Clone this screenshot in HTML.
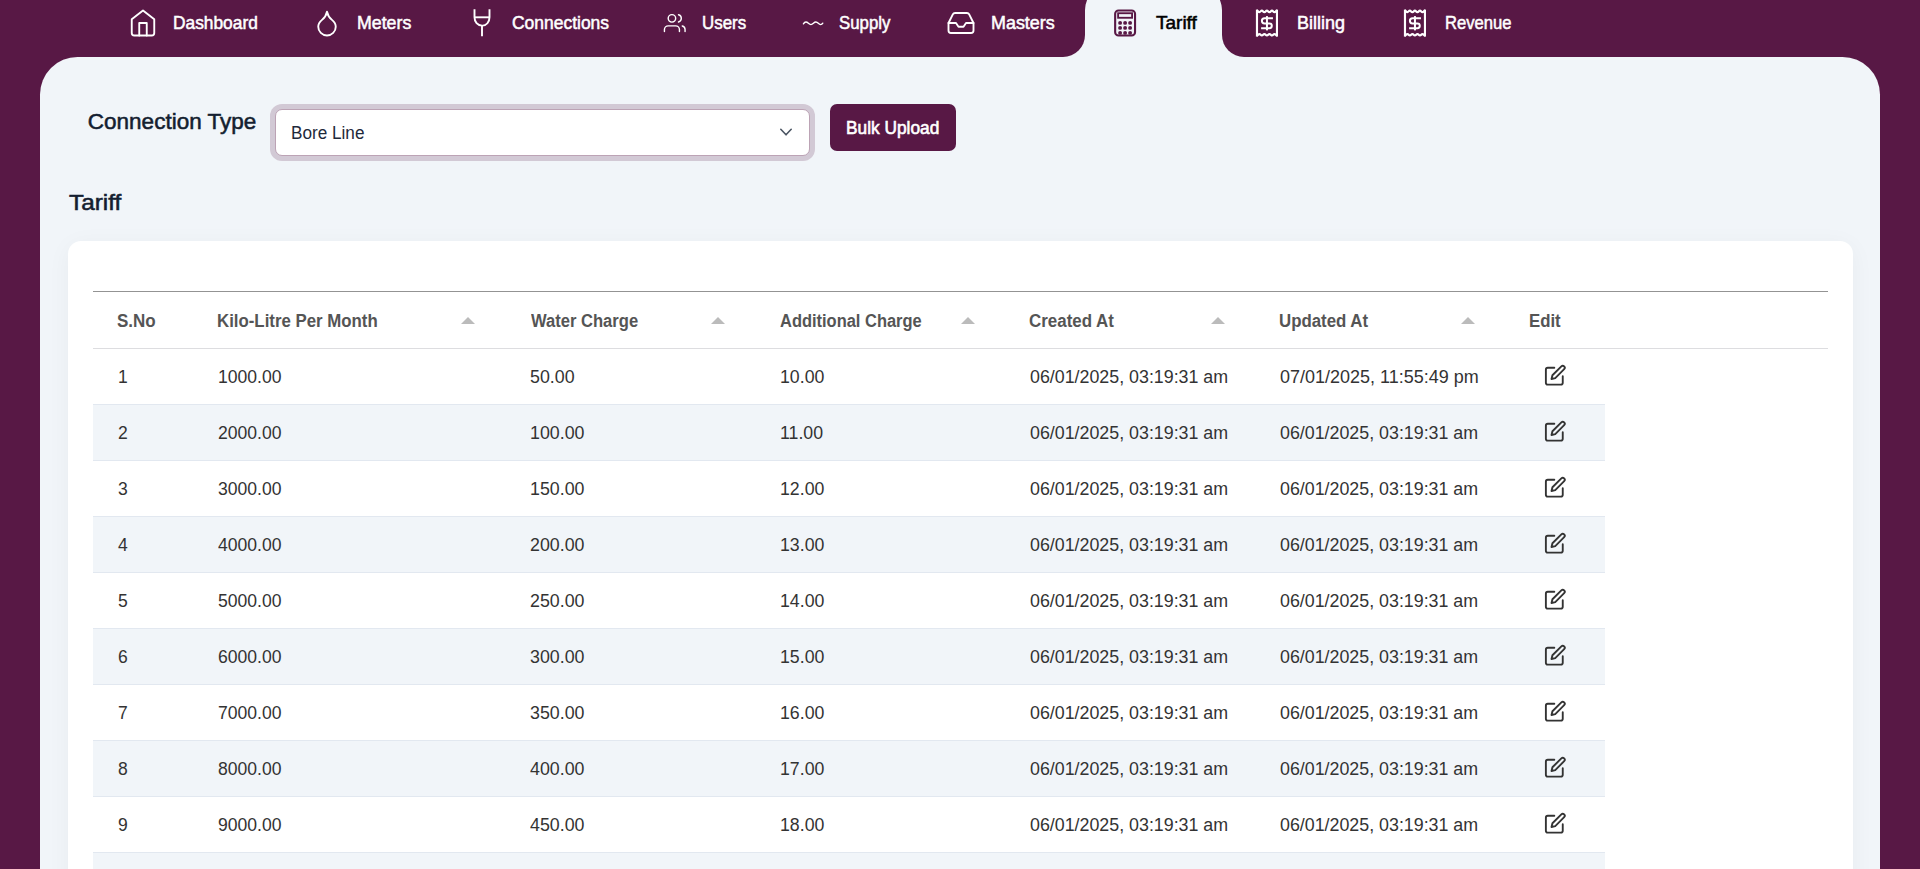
<!DOCTYPE html>
<html lang="en">
<head>
<meta charset="utf-8">
<title>Tariff</title>
<style>
*{box-sizing:border-box;margin:0;padding:0}
html,body{width:1920px;height:869px;overflow:hidden}
body{background:#581845;font-family:"Liberation Sans",sans-serif;position:relative;color:#1e293b}
.abs{position:absolute}
.t{position:absolute;white-space:nowrap;line-height:24px;height:24px;transform-origin:0 50%}
.nav{font-size:17.7px;color:#fff;-webkit-text-stroke:.5px #fff}
.nav.act{color:#000;-webkit-text-stroke:.5px #000}
.ico{position:absolute;overflow:visible}
#panel{left:40px;top:57px;width:1840px;height:900px;background:#f1f5f9;border-radius:37.5px 37.5px 0 0}
#tab{left:1085px;top:-15px;width:137px;height:73px;background:#f1f5f9;border-radius:25px 25px 0 0}
.inv{position:absolute;width:22px;height:22px;top:35px;overflow:hidden}
.inv:before{content:"";position:absolute;width:44px;height:44px;border-radius:50%;box-shadow:0 0 0 30px #f1f5f9}
#invl{left:1063px}#invl:before{left:-22px;top:-22px}
#invr{left:1222px}#invr:before{left:0;top:-22px}
.h{font-size:22.5px;-webkit-text-stroke:.55px #141e30;color:#141e30}
#sel{left:275px;top:109px;width:535px;height:47px;background:#fff;border:1px solid #bca3b5;border-radius:7px;box-shadow:0 0 0 5px rgba(88,24,69,.2)}
#btn{left:830px;top:104px;width:126px;height:47px;background:#581845;border-radius:7px}
.btxt{font-size:17.5px;color:#fff;-webkit-text-stroke:.6px #fff}
.stxt{font-size:17.5px;color:#1e293b}
#card{left:67.5px;top:240.5px;width:1785.5px;height:700px;background:#fff;border-radius:13px;box-shadow:0 4px 25px rgba(0,0,0,.045)}
#ltop{left:92.5px;top:291px;width:1735px;height:1px;background:#939393}
#lbot{left:92.5px;top:348px;width:1735px;height:1px;background:#dddde0}
.th{font-size:17.5px;font-weight:bold;color:#555}
.td{font-size:17.5px;color:#333}
.row{position:absolute;left:92.5px;width:1512.5px;height:56px;border-bottom:1px solid #e2e8f0}
.row.ev{background:#f1f5f9}
.arr{position:absolute;width:0;height:0;border-left:7.5px solid transparent;border-right:7.5px solid transparent;border-bottom:7.5px solid #bbb;top:316.5px}
</style>
</head>
<body>
<div id="panel" class="abs"></div>
<div id="tab" class="abs"></div>
<div id="invl" class="inv"></div>
<div id="invr" class="inv"></div>
<nav class="abs" style="left:0;top:0">
<svg id="i_home" class="ico" style="left:128px;top:8px" width="30" height="30" viewBox="0 0 30 30"><g transform="translate(0.000 0.000) scale(1.25000 1.25000)" fill="none" stroke="#fff" stroke-width="1.5" stroke-linecap="round" stroke-linejoin="round"><path d="m3 9 9-7 9 7v11a2 2 0 0 1-2 2H5a2 2 0 0 1-2-2z"/><polyline points="9 22 9 12 15 12 15 22"/></g></svg>
<svg id="i_drop" class="ico" style="left:312px;top:8px" width="30" height="30" viewBox="0 0 30 30"><g transform="translate(0.000 0.000) scale(1.25000 1.25000)" fill="none" stroke="#fff" stroke-width="1.5" stroke-linecap="round" stroke-linejoin="round"><path d="M12 22a7 7 0 0 0 7-7c0-2-1-3.9-3-5.500s-3.500-4-4-6.500c-.5 2.500-2 4.900-4 6.500C6 11.100 5 13 5 15a7 7 0 0 0 7 7z"/></g></svg>
<svg id="i_conn" class="ico" style="left:467px;top:8px" width="30" height="30" viewBox="0 0 30 30"><g transform="translate(0.000 0.000)" fill="none" stroke="#fff" stroke-width="1.9" stroke-linecap="butt" stroke-linejoin="round"><path d="M7.5 1.200V9.300c0 4.500 3 8 7.500 8.300s7.500-3.800 7.500-8.300V1.200"/><path d="M7.500 9.300h15"/><path d="M15 17.500V28.300"/></g></svg>
<svg id="i_users" class="ico" style="left:663px;top:11px" width="23" height="24" viewBox="0 0 23 24"><g transform="translate(0.500 0.800) scale(0.93750 0.93750)" fill="none" stroke="#fff" stroke-width="1.5" stroke-linecap="round" stroke-linejoin="round"><path d="M17 21v-2a4 4 0 0 0-4-4H5a4 4 0 0 0-4 4v2"/><circle cx="9" cy="7" r="4"/><path d="M23 21v-2a4 4 0 0 0-3-3.870"/><path d="M16 3.130a4 4 0 0 1 0 7.750"/></g></svg>
<svg id="i_supply" class="ico" style="left:800px;top:15px" width="26" height="16" viewBox="0 0 26 16"><g transform="translate(0.000 0.000)" fill="none" stroke="#fff" stroke-width="1.350" stroke-linecap="round" stroke-linejoin="round"><path d="M3.400 8.900C4.100 7.700 4.900 7 5.900 7c2.300 0 2.700 2.600 5 2.600s2.700-2.600 5-2.600 2.500 2.600 4.700 2.600c1 0 1.700-.500 2.200-1.400"/></g></svg>
<svg id="i_inbox" class="ico" style="left:946px;top:8px" width="30" height="30" viewBox="0 0 30 30"><g transform="translate(0.000 0.000) scale(1.25000 1.25000)" fill="none" stroke="#fff" stroke-width="1.5" stroke-linecap="round" stroke-linejoin="round"><polyline points="22 12 16 12 14 15 10 15 8 12 2 12"/><path d="M5.450 5.110 2 12v6a2 2 0 0 0 2 2h16a2 2 0 0 0 2-2v-6l-3.450-6.890A2 2 0 0 0 16.760 4H7.240a2 2 0 0 0-1.790 1.110z"/></g></svg>
<svg id="i_calc" class="ico" style="left:1114px;top:9px" width="23" height="28" viewBox="0 0 23 28"><g transform="translate(0.100 0.400)" ><rect x="1.050" y="1.050" width="19.900" height="25.100" rx="3.400" fill="none" stroke="#581845" stroke-width="2.100"/><rect x="4.025" y="3.825" width="13.950" height="4.550" fill="none" stroke="#581845" stroke-width="1.850"/><circle cx="6" cy="13.5" r="1.950" fill="#581845"/><circle cx="11" cy="13.5" r="1.950" fill="#581845"/><circle cx="16" cy="13.5" r="1.950" fill="#581845"/><circle cx="6" cy="18.5" r="1.950" fill="#581845"/><circle cx="11" cy="18.5" r="1.950" fill="#581845"/><circle cx="16" cy="18.5" r="1.950" fill="#581845"/><circle cx="6" cy="23.5" r="1.950" fill="#581845"/><circle cx="11" cy="23.5" r="1.950" fill="#581845"/><circle cx="16" cy="23.5" r="1.950" fill="#581845"/></g></svg>
<svg id="i_bill" class="ico" style="left:1255px;top:9px" width="24" height="28" viewBox="0 0 24 28"><g transform="translate(0.900 0.600)" ><rect x="0" y="0" width="2.150" height="27.0" fill="#fff"/><rect x="20.000" y="0" width="2.100" height="27.0" fill="#fff"/><path d="M1.0 1.1C2.250 1.1 2.250 2.5 3.5 2.5C4.725 2.5 4.725 1.1 5.95 1.1C7.225 1.1 7.225 2.5 8.5 2.5C9.750 2.5 9.750 1.1 11.0 1.1C12.275 1.1 12.275 2.5 13.55 2.5C14.800 2.5 14.800 1.1 16.05 1.1C17.325 1.1 17.325 2.5 18.6 2.5C19.850 2.5 19.850 1.1 21.1 1.1" fill="none" stroke="#fff" stroke-width="2.200"/><path d="M1.0 25.9C2.250 25.9 2.250 24.5 3.5 24.5C4.725 24.5 4.725 25.9 5.95 25.9C7.225 25.9 7.225 24.5 8.5 24.5C9.750 24.5 9.750 25.9 11.0 25.9C12.275 25.9 12.275 24.5 13.55 24.5C14.800 24.5 14.800 25.9 16.05 25.9C17.325 25.9 17.325 24.5 18.6 24.5C19.850 24.5 19.850 25.9 21.1 25.9" fill="none" stroke="#fff" stroke-width="2.200"/><path d="M17.050 8.600H8.600a2.600 2.600 0 0 0 0 5.200H13.500a2.400 2.400 0 0 1 0 4.800H5.200" fill="none" stroke="#fff" stroke-width="2"/><path d="M11.050 6.500V20.800" fill="none" stroke="#fff" stroke-width="2"/></g></svg>
<svg id="i_rev" class="ico" style="left:1403px;top:9px" width="24" height="28" viewBox="0 0 24 28"><g transform="translate(0.900 0.600)" ><rect x="0" y="0" width="2.150" height="27.0" fill="#fff"/><rect x="20.000" y="0" width="2.100" height="27.0" fill="#fff"/><path d="M1.0 1.1C2.250 1.1 2.250 2.5 3.5 2.5C4.725 2.5 4.725 1.1 5.95 1.1C7.225 1.1 7.225 2.5 8.5 2.5C9.750 2.5 9.750 1.1 11.0 1.1C12.275 1.1 12.275 2.5 13.55 2.5C14.800 2.5 14.800 1.1 16.05 1.1C17.325 1.1 17.325 2.5 18.6 2.5C19.850 2.5 19.850 1.1 21.1 1.1" fill="none" stroke="#fff" stroke-width="2.200"/><path d="M1.0 25.9C2.250 25.9 2.250 24.5 3.5 24.5C4.725 24.5 4.725 25.9 5.95 25.9C7.225 25.9 7.225 24.5 8.5 24.5C9.750 24.5 9.750 25.9 11.0 25.9C12.275 25.9 12.275 24.5 13.55 24.5C14.800 24.5 14.800 25.9 16.05 25.9C17.325 25.9 17.325 24.5 18.6 24.5C19.850 24.5 19.850 25.9 21.1 25.9" fill="none" stroke="#fff" stroke-width="2.200"/><path d="M17.050 8.600H8.600a2.600 2.600 0 0 0 0 5.200H13.500a2.400 2.400 0 0 1 0 4.800H5.200" fill="none" stroke="#fff" stroke-width="2"/><path d="M11.050 6.500V20.800" fill="none" stroke="#fff" stroke-width="2"/></g></svg>
<div id="n_dash" class="t nav" style="left:172.78px;top:10.77px;transform:scaleX(0.9802)">Dashboard</div>
<div id="n_met" class="t nav" style="left:356.90px;top:10.77px;transform:scaleX(1.0040)">Meters</div>
<div id="n_con" class="t nav" style="left:511.92px;top:10.77px;transform:scaleX(0.9869)">Connections</div>
<div id="n_usr" class="t nav" style="left:702.23px;top:10.77px;transform:scaleX(0.9550)">Users</div>
<div id="n_sup" class="t nav" style="left:839.08px;top:10.77px;transform:scaleX(0.9497)">Supply</div>
<div id="n_mas" class="t nav" style="left:991.34px;top:10.77px;transform:scaleX(1.0130)">Masters</div>
<div id="n_tar" class="t nav act" style="left:1156.12px;top:10.77px;transform:scaleX(1.0739)">Tariff</div>
<div id="n_bil" class="t nav" style="left:1296.78px;top:10.77px;transform:scaleX(1.0167)">Billing</div>
<div id="n_rev" class="t nav" style="left:1444.52px;top:10.77px;transform:scaleX(0.9396)">Revenue</div>
</nav>
<main class="abs" style="left:0;top:0">
<section class="abs" style="left:0;top:0">
<div id="f_lbl" class="t h" style="left:87.84px;top:109.90px">Connection Type</div>
<div id="sel" class="abs"></div>
<div id="f_sel" class="t stxt" style="left:290.58px;top:120.94px;transform:scaleX(0.9803)">Bore Line</div>
<svg id="i_chev" class="ico" style="left:778px;top:124px" width="16" height="16" viewBox="0 0 16 16"><g transform="translate(0.000 0.000)" fill="none" stroke="#4b5563" stroke-width="1.600" stroke-linecap="round" stroke-linejoin="round"><path d="M2.800 5.300 8 10.800 13.200 5.300"/></g></svg>
<div id="btn" class="abs"></div>
<div id="f_btn" class="t btxt" style="left:846.17px;top:115.69px;transform:scaleX(0.9884)">Bulk Upload</div>
<div id="f_ttl" class="t h" style="left:68.84px;top:191.00px;transform:scaleX(1.0794)">Tariff</div>
</section>
<section class="abs" style="left:0;top:0">
<div id="card" class="abs"></div>
<div id="ltop" class="abs"></div>
<div id="lbot" class="abs"></div>
<div id="h0" class="t th" style="left:116.85px;top:308.84px;transform:scaleX(0.9721)">S.No</div>
<div id="h1" class="t th" style="left:216.90px;top:308.84px;transform:scaleX(0.9608)">Kilo-Litre Per Month</div>
<div id="h2" class="t th" style="left:530.81px;top:308.84px;transform:scaleX(0.9468)">Water Charge</div>
<div id="h3" class="t th" style="left:780.08px;top:308.84px;transform:scaleX(0.9403)">Additional Charge</div>
<div id="h4" class="t th" style="left:1029.13px;top:308.84px;transform:scaleX(0.9670)">Created At</div>
<div id="h5" class="t th" style="left:1279.25px;top:308.84px;transform:scaleX(0.9617)">Updated At</div>
<div id="h6" class="t th" style="left:1528.89px;top:308.84px;transform:scaleX(0.9588)">Edit</div>
<div class="arr" style="left:460.5px"></div>
<div class="arr" style="left:710.5px"></div>
<div class="arr" style="left:960.5px"></div>
<div class="arr" style="left:1210.5px"></div>
<div class="arr" style="left:1460.5px"></div>
<div class="row" style="top:349px"></div>
<div id="r0c0" class="t td" style="left:117.90px;top:365.04px">1</div>
<div id="r0c1" class="t td" style="left:217.51px;top:365.04px;transform:scaleX(1.0038)">1000.00</div>
<div id="r0c2" class="t td" style="left:529.82px;top:365.04px;transform:scaleX(1.0166)">50.00</div>
<div id="r0c3" class="t td" style="left:780.01px;top:365.04px;transform:scaleX(1.0127)">10.00</div>
<div id="r0c4" class="t td" style="left:1029.94px;top:365.04px;transform:scaleX(1.0181)">06/01/2025, 03:19:31 am</div>
<div id="r0c5" class="t td" style="left:1279.94px;top:365.04px;transform:scaleX(1.0276)">07/01/2025, 11:55:49 pm</div>
<svg id="e0" class="ico" style="left:1544px;top:364px" width="23" height="23" viewBox="0 0 23 23"><g transform="translate(0.000 0.000) scale(0.93750 0.93750)" fill="none" stroke="#333" stroke-width="2" stroke-linecap="round" stroke-linejoin="round"><path d="M11 4H4a2 2 0 0 0-2 2v14a2 2 0 0 0 2 2h14a2 2 0 0 0 2-2v-7"/><path d="M18.500 2.500a2.121 2.121 0 0 1 3 3L12 15l-4 1 1-4 9.500-9.500z"/></g></svg>
<div class="row ev" style="top:405px"></div>
<div id="r1c0" class="t td" style="left:117.90px;top:421.04px">2</div>
<div id="r1c1" class="t td" style="left:217.51px;top:421.04px;transform:scaleX(1.0038)">2000.00</div>
<div id="r1c2" class="t td" style="left:529.82px;top:421.04px;transform:scaleX(1.0166)">100.00</div>
<div id="r1c3" class="t td" style="left:780.01px;top:421.04px;transform:scaleX(1.0127)">11.00</div>
<div id="r1c4" class="t td" style="left:1029.94px;top:421.04px;transform:scaleX(1.0181)">06/01/2025, 03:19:31 am</div>
<div id="r1c5" class="t td" style="left:1279.97px;top:421.04px;transform:scaleX(1.0181)">06/01/2025, 03:19:31 am</div>
<svg id="e1" class="ico" style="left:1544px;top:420px" width="23" height="23" viewBox="0 0 23 23"><g transform="translate(0.000 0.000) scale(0.93750 0.93750)" fill="none" stroke="#333" stroke-width="2" stroke-linecap="round" stroke-linejoin="round"><path d="M11 4H4a2 2 0 0 0-2 2v14a2 2 0 0 0 2 2h14a2 2 0 0 0 2-2v-7"/><path d="M18.500 2.500a2.121 2.121 0 0 1 3 3L12 15l-4 1 1-4 9.500-9.500z"/></g></svg>
<div class="row" style="top:461px"></div>
<div id="r2c0" class="t td" style="left:117.90px;top:477.04px">3</div>
<div id="r2c1" class="t td" style="left:217.51px;top:477.04px;transform:scaleX(1.0038)">3000.00</div>
<div id="r2c2" class="t td" style="left:529.82px;top:477.04px;transform:scaleX(1.0166)">150.00</div>
<div id="r2c3" class="t td" style="left:780.01px;top:477.04px;transform:scaleX(1.0127)">12.00</div>
<div id="r2c4" class="t td" style="left:1029.94px;top:477.04px;transform:scaleX(1.0181)">06/01/2025, 03:19:31 am</div>
<div id="r2c5" class="t td" style="left:1279.97px;top:477.04px;transform:scaleX(1.0181)">06/01/2025, 03:19:31 am</div>
<svg id="e2" class="ico" style="left:1544px;top:476px" width="23" height="23" viewBox="0 0 23 23"><g transform="translate(0.000 0.000) scale(0.93750 0.93750)" fill="none" stroke="#333" stroke-width="2" stroke-linecap="round" stroke-linejoin="round"><path d="M11 4H4a2 2 0 0 0-2 2v14a2 2 0 0 0 2 2h14a2 2 0 0 0 2-2v-7"/><path d="M18.500 2.500a2.121 2.121 0 0 1 3 3L12 15l-4 1 1-4 9.500-9.500z"/></g></svg>
<div class="row ev" style="top:517px"></div>
<div id="r3c0" class="t td" style="left:117.90px;top:533.04px">4</div>
<div id="r3c1" class="t td" style="left:217.51px;top:533.04px;transform:scaleX(1.0038)">4000.00</div>
<div id="r3c2" class="t td" style="left:529.82px;top:533.04px;transform:scaleX(1.0166)">200.00</div>
<div id="r3c3" class="t td" style="left:780.01px;top:533.04px;transform:scaleX(1.0127)">13.00</div>
<div id="r3c4" class="t td" style="left:1029.94px;top:533.04px;transform:scaleX(1.0181)">06/01/2025, 03:19:31 am</div>
<div id="r3c5" class="t td" style="left:1279.97px;top:533.04px;transform:scaleX(1.0181)">06/01/2025, 03:19:31 am</div>
<svg id="e3" class="ico" style="left:1544px;top:532px" width="23" height="23" viewBox="0 0 23 23"><g transform="translate(0.000 0.000) scale(0.93750 0.93750)" fill="none" stroke="#333" stroke-width="2" stroke-linecap="round" stroke-linejoin="round"><path d="M11 4H4a2 2 0 0 0-2 2v14a2 2 0 0 0 2 2h14a2 2 0 0 0 2-2v-7"/><path d="M18.500 2.500a2.121 2.121 0 0 1 3 3L12 15l-4 1 1-4 9.500-9.500z"/></g></svg>
<div class="row" style="top:573px"></div>
<div id="r4c0" class="t td" style="left:117.90px;top:589.04px">5</div>
<div id="r4c1" class="t td" style="left:217.51px;top:589.04px;transform:scaleX(1.0038)">5000.00</div>
<div id="r4c2" class="t td" style="left:529.82px;top:589.04px;transform:scaleX(1.0166)">250.00</div>
<div id="r4c3" class="t td" style="left:780.01px;top:589.04px;transform:scaleX(1.0127)">14.00</div>
<div id="r4c4" class="t td" style="left:1029.94px;top:589.04px;transform:scaleX(1.0181)">06/01/2025, 03:19:31 am</div>
<div id="r4c5" class="t td" style="left:1279.97px;top:589.04px;transform:scaleX(1.0181)">06/01/2025, 03:19:31 am</div>
<svg id="e4" class="ico" style="left:1544px;top:588px" width="23" height="23" viewBox="0 0 23 23"><g transform="translate(0.000 0.000) scale(0.93750 0.93750)" fill="none" stroke="#333" stroke-width="2" stroke-linecap="round" stroke-linejoin="round"><path d="M11 4H4a2 2 0 0 0-2 2v14a2 2 0 0 0 2 2h14a2 2 0 0 0 2-2v-7"/><path d="M18.500 2.500a2.121 2.121 0 0 1 3 3L12 15l-4 1 1-4 9.500-9.500z"/></g></svg>
<div class="row ev" style="top:629px"></div>
<div id="r5c0" class="t td" style="left:117.90px;top:645.04px">6</div>
<div id="r5c1" class="t td" style="left:217.51px;top:645.04px;transform:scaleX(1.0038)">6000.00</div>
<div id="r5c2" class="t td" style="left:529.82px;top:645.04px;transform:scaleX(1.0166)">300.00</div>
<div id="r5c3" class="t td" style="left:780.01px;top:645.04px;transform:scaleX(1.0127)">15.00</div>
<div id="r5c4" class="t td" style="left:1029.94px;top:645.04px;transform:scaleX(1.0181)">06/01/2025, 03:19:31 am</div>
<div id="r5c5" class="t td" style="left:1279.97px;top:645.04px;transform:scaleX(1.0181)">06/01/2025, 03:19:31 am</div>
<svg id="e5" class="ico" style="left:1544px;top:644px" width="23" height="23" viewBox="0 0 23 23"><g transform="translate(0.000 0.000) scale(0.93750 0.93750)" fill="none" stroke="#333" stroke-width="2" stroke-linecap="round" stroke-linejoin="round"><path d="M11 4H4a2 2 0 0 0-2 2v14a2 2 0 0 0 2 2h14a2 2 0 0 0 2-2v-7"/><path d="M18.500 2.500a2.121 2.121 0 0 1 3 3L12 15l-4 1 1-4 9.500-9.500z"/></g></svg>
<div class="row" style="top:685px"></div>
<div id="r6c0" class="t td" style="left:117.90px;top:701.04px">7</div>
<div id="r6c1" class="t td" style="left:217.51px;top:701.04px;transform:scaleX(1.0038)">7000.00</div>
<div id="r6c2" class="t td" style="left:529.82px;top:701.04px;transform:scaleX(1.0166)">350.00</div>
<div id="r6c3" class="t td" style="left:780.01px;top:701.04px;transform:scaleX(1.0127)">16.00</div>
<div id="r6c4" class="t td" style="left:1029.94px;top:701.04px;transform:scaleX(1.0181)">06/01/2025, 03:19:31 am</div>
<div id="r6c5" class="t td" style="left:1279.97px;top:701.04px;transform:scaleX(1.0181)">06/01/2025, 03:19:31 am</div>
<svg id="e6" class="ico" style="left:1544px;top:700px" width="23" height="23" viewBox="0 0 23 23"><g transform="translate(0.000 0.000) scale(0.93750 0.93750)" fill="none" stroke="#333" stroke-width="2" stroke-linecap="round" stroke-linejoin="round"><path d="M11 4H4a2 2 0 0 0-2 2v14a2 2 0 0 0 2 2h14a2 2 0 0 0 2-2v-7"/><path d="M18.500 2.500a2.121 2.121 0 0 1 3 3L12 15l-4 1 1-4 9.500-9.500z"/></g></svg>
<div class="row ev" style="top:741px"></div>
<div id="r7c0" class="t td" style="left:117.90px;top:757.04px">8</div>
<div id="r7c1" class="t td" style="left:217.51px;top:757.04px;transform:scaleX(1.0038)">8000.00</div>
<div id="r7c2" class="t td" style="left:529.82px;top:757.04px;transform:scaleX(1.0166)">400.00</div>
<div id="r7c3" class="t td" style="left:780.01px;top:757.04px;transform:scaleX(1.0127)">17.00</div>
<div id="r7c4" class="t td" style="left:1029.94px;top:757.04px;transform:scaleX(1.0181)">06/01/2025, 03:19:31 am</div>
<div id="r7c5" class="t td" style="left:1279.97px;top:757.04px;transform:scaleX(1.0181)">06/01/2025, 03:19:31 am</div>
<svg id="e7" class="ico" style="left:1544px;top:756px" width="23" height="23" viewBox="0 0 23 23"><g transform="translate(0.000 0.000) scale(0.93750 0.93750)" fill="none" stroke="#333" stroke-width="2" stroke-linecap="round" stroke-linejoin="round"><path d="M11 4H4a2 2 0 0 0-2 2v14a2 2 0 0 0 2 2h14a2 2 0 0 0 2-2v-7"/><path d="M18.500 2.500a2.121 2.121 0 0 1 3 3L12 15l-4 1 1-4 9.500-9.500z"/></g></svg>
<div class="row" style="top:797px"></div>
<div id="r8c0" class="t td" style="left:117.90px;top:813.04px">9</div>
<div id="r8c1" class="t td" style="left:217.51px;top:813.04px;transform:scaleX(1.0038)">9000.00</div>
<div id="r8c2" class="t td" style="left:529.82px;top:813.04px;transform:scaleX(1.0166)">450.00</div>
<div id="r8c3" class="t td" style="left:780.01px;top:813.04px;transform:scaleX(1.0127)">18.00</div>
<div id="r8c4" class="t td" style="left:1029.94px;top:813.04px;transform:scaleX(1.0181)">06/01/2025, 03:19:31 am</div>
<div id="r8c5" class="t td" style="left:1279.97px;top:813.04px;transform:scaleX(1.0181)">06/01/2025, 03:19:31 am</div>
<svg id="e8" class="ico" style="left:1544px;top:812px" width="23" height="23" viewBox="0 0 23 23"><g transform="translate(0.000 0.000) scale(0.93750 0.93750)" fill="none" stroke="#333" stroke-width="2" stroke-linecap="round" stroke-linejoin="round"><path d="M11 4H4a2 2 0 0 0-2 2v14a2 2 0 0 0 2 2h14a2 2 0 0 0 2-2v-7"/><path d="M18.500 2.500a2.121 2.121 0 0 1 3 3L12 15l-4 1 1-4 9.500-9.500z"/></g></svg>
<div class="row ev" style="top:853px"></div>
<div id="r9c0" class="t td" style="left:117.90px;top:869.04px">10</div>
<div id="r9c1" class="t td" style="left:217.51px;top:869.04px;transform:scaleX(1.0038)">10000.00</div>
<div id="r9c2" class="t td" style="left:529.82px;top:869.04px;transform:scaleX(1.0166)">500.00</div>
<div id="r9c3" class="t td" style="left:780.01px;top:869.04px;transform:scaleX(1.0127)">19.00</div>
<div id="r9c4" class="t td" style="left:1029.94px;top:869.04px;transform:scaleX(1.0181)">06/01/2025, 03:19:31 am</div>
<div id="r9c5" class="t td" style="left:1279.97px;top:869.04px;transform:scaleX(1.0181)">06/01/2025, 03:19:31 am</div>
</section>
</main>
</body>
</html>
